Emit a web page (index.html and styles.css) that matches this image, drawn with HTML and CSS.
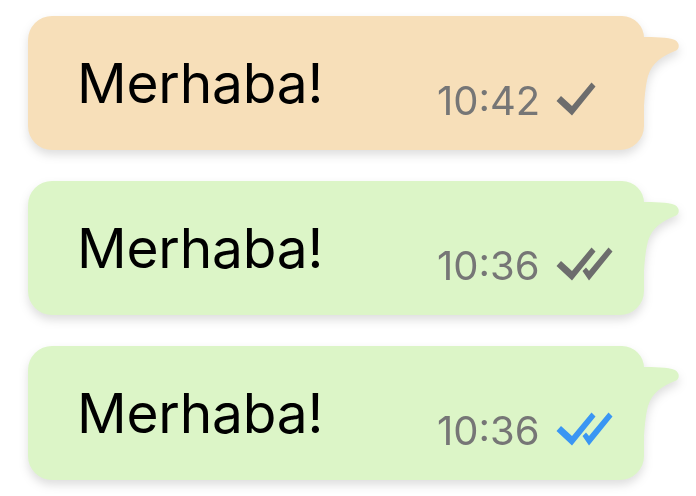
FILE: index.html
```html
<!DOCTYPE html>
<html>
<head>
<meta charset="utf-8">
<link rel="stylesheet" href="styles.css">
</head>
<body>
<div class="list">
  <div class="bubble pending">
    <span class="text">Merhaba!</span>
    <span class="meta">
      <span class="time">10:42</span>
      <svg class="ticks grey" viewBox="0 0 57 34" width="57" height="34"><path d="M0.5 19 L5 14 L16 24 L35.5 0.5 L39.5 4.5 L16 33.5 Z"/></svg>
    </span>
    <svg class="tail" viewBox="600 0 60 90" width="60" height="90"><path d="M600 21 L614 21 C626 21 640 21 647 24 C652 27 652 33 647 35 C634 40 624 47 620 60 C618 68 617 76 616 90 L600 90 Z"/></svg>
  </div>
  <div class="bubble sent">
    <span class="text">Merhaba!</span>
    <span class="meta">
      <span class="time">10:36</span>
      <svg class="ticks grey" viewBox="0 0 57 34" width="57" height="34"><path d="M0.5 19 L5 14 L16 24 L35.5 0.5 L39.5 4.5 L16 33.5 Z"/><path d="M26.5 24 L30 20.5 L33 24 L52.5 0.5 L56.5 4.5 L33 33.5 Z"/></svg>
    </span>
    <svg class="tail" viewBox="600 0 60 90" width="60" height="90"><path d="M600 21 L614 21 C626 21 640 21 647 24 C652 27 652 33 647 35 C634 40 624 47 620 60 C618 68 617 76 616 90 L600 90 Z"/></svg>
  </div>
  <div class="bubble sent">
    <span class="text">Merhaba!</span>
    <span class="meta">
      <span class="time">10:36</span>
      <svg class="ticks blue" viewBox="0 0 57 34" width="57" height="34"><path d="M0.5 19 L5 14 L16 24 L35.5 0.5 L39.5 4.5 L16 33.5 Z"/><path d="M26.5 24 L30 20.5 L33 24 L52.5 0.5 L56.5 4.5 L33 33.5 Z"/></svg>
    </span>
    <svg class="tail" viewBox="600 0 60 90" width="60" height="90"><path d="M600 21 L614 21 C626 21 640 21 647 24 C652 27 652 33 647 35 C634 40 624 47 620 60 C618 68 617 76 616 90 L600 90 Z"/></svg>
  </div>
</div>
</body>
</html>
```
FILE: styles.css
```css
html, body {
  margin: 0;
  padding: 0;
  background: #ffffff;
}
body {
  width: 696px;
  height: 496px;
  overflow: hidden;
  font-family: Inter, "Noto Sans", sans-serif;
}
.list {
  display: flex;
  flex-direction: column;
  gap: 31px;
  padding: 16px 0 0 28px;
}
.bubble {
  position: relative;
  width: 616px;
  height: 134px;
  box-sizing: border-box;
  border-radius: 24px 22px 24px 24px;
  display: flex;
  align-items: flex-start;
  padding-left: 49px;
  filter: drop-shadow(0 5px 5px rgba(0, 0, 0, 0.13));
}
.pending { background: #f7dfb9; }
.pending .tail { fill: #f7dfb9; }
.sent { background: #dcf5c7; }
.sent .tail { fill: #dcf5c7; }
.text {
  flex: 0 0 360px;
  font-size: 55px;
  line-height: 66px;
  margin-top: 34px;
  color: #000;
  letter-spacing: -0.2px;
}
.meta {
  display: flex;
  align-items: flex-start;
  margin-top: 65px;
}
.time {
  font-size: 40px;
  line-height: 40px;
  color: #767676;
  width: 119px;
}
.ticks {
  display: block;
  margin-top: 1px;
}
.grey { fill: #6d6d6d; }
.blue { fill: #3a96f3; }
.tail {
  position: absolute;
  left: 600px;
  top: 0;
}
```
